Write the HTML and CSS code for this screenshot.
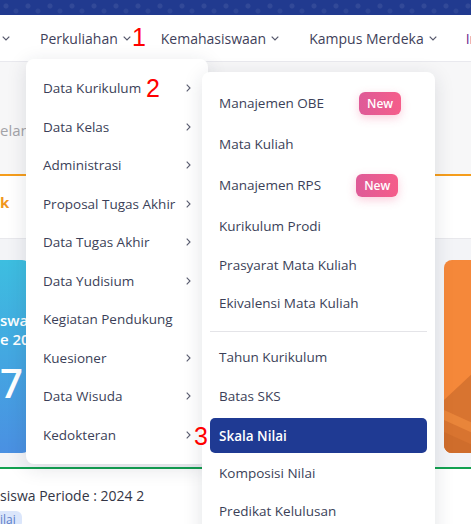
FILE: index.html
```html
<!DOCTYPE html>
<html lang="id">
<head>
<meta charset="utf-8">
<title>Menu Perkuliahan</title>
<link rel="stylesheet" href="styles.css">
</head>
<body>
<div class="page">
  <header class="topbar"></header>
  <nav class="navbar">
    <div class="nav-item"><svg class="caret first" width="8" height="5" viewBox="0 0 8 5"><polyline points="0.7,0.7 4,4 7.3,0.7"/></svg></div>
    <div class="nav-item">Perkuliahan<svg class="caret" width="8" height="5" viewBox="0 0 8 5"><polyline points="0.7,0.7 4,4 7.3,0.7"/></svg></div>
    <div class="nav-item">Kemahasiswaan<svg class="caret" width="8" height="5" viewBox="0 0 8 5"><polyline points="0.7,0.7 4,4 7.3,0.7"/></svg></div>
    <div class="nav-item">Kampus Merdeka<svg class="caret" width="8" height="5" viewBox="0 0 8 5"><polyline points="0.7,0.7 4,4 7.3,0.7"/></svg></div>
    <div class="nav-item nav-purple">Info</div>
  </nav>
  <main class="content">
    <section class="panel">
      <div class="panel-head"><span class="muted">elan</span></div>
      <div class="panel-body"><span class="accent">k</span></div>
    </section>
    <section class="stats">
      <div class="stat stat-blue">
        <div class="stat-label">swa</div>
        <div class="stat-label">e 20</div>
        <div class="stat-value">7</div>
      </div>
      <div class="stat stat-orange">
        <svg class="stat-deco" width="40" height="193" viewBox="0 0 40 193" preserveAspectRatio="none">
          <polygon points="0,140 30,112 40,112 40,193 0,193" fill="#d87430"/>
          <polygon points="0,150 40,168 40,178 0,160" fill="#e9853a"/>
          <polygon points="0,172 40,190 40,193 0,193" fill="#cf6d2c"/>
        </svg>
      </div>
    </section>
    <section class="period">
      <div class="period-title">siswa Periode : 2024 2</div>
      <span class="tag">ilai</span>
    </section>
  </main>

  <div class="menu menu-main">
    <div class="menu-item"><span>Data Kurikulum</span><svg class="chev" width="5" height="8" viewBox="0 0 5 8"><polyline points="0.7,0.7 4,4 0.7,7.3"/></svg></div>
    <div class="menu-item"><span>Data Kelas</span><svg class="chev" width="5" height="8" viewBox="0 0 5 8"><polyline points="0.7,0.7 4,4 0.7,7.3"/></svg></div>
    <div class="menu-item"><span>Administrasi</span><svg class="chev" width="5" height="8" viewBox="0 0 5 8"><polyline points="0.7,0.7 4,4 0.7,7.3"/></svg></div>
    <div class="menu-item"><span>Proposal Tugas Akhir</span><svg class="chev" width="5" height="8" viewBox="0 0 5 8"><polyline points="0.7,0.7 4,4 0.7,7.3"/></svg></div>
    <div class="menu-item"><span>Data Tugas Akhir</span><svg class="chev" width="5" height="8" viewBox="0 0 5 8"><polyline points="0.7,0.7 4,4 0.7,7.3"/></svg></div>
    <div class="menu-item"><span>Data Yudisium</span><svg class="chev" width="5" height="8" viewBox="0 0 5 8"><polyline points="0.7,0.7 4,4 0.7,7.3"/></svg></div>
    <div class="menu-item"><span>Kegiatan Pendukung</span></div>
    <div class="menu-item"><span>Kuesioner</span><svg class="chev" width="5" height="8" viewBox="0 0 5 8"><polyline points="0.7,0.7 4,4 0.7,7.3"/></svg></div>
    <div class="menu-item"><span>Data Wisuda</span><svg class="chev" width="5" height="8" viewBox="0 0 5 8"><polyline points="0.7,0.7 4,4 0.7,7.3"/></svg></div>
    <div class="menu-item"><span>Kedokteran</span><svg class="chev" width="5" height="8" viewBox="0 0 5 8"><polyline points="0.7,0.7 4,4 0.7,7.3"/></svg></div>
  </div>

  <div class="menu menu-sub">
    <div class="sub-item tall">Manajemen OBE<span class="badge">New</span></div>
    <div class="sub-item">Mata Kuliah</div>
    <div class="sub-item tall">Manajemen RPS<span class="badge">New</span></div>
    <div class="sub-item">Kurikulum Prodi</div>
    <div class="sub-item">Prasyarat Mata Kuliah</div>
    <div class="sub-item">Ekivalensi Mata Kuliah</div>
    <div class="divider"></div>
    <div class="sub-item">Tahun Kurikulum</div>
    <div class="sub-item">Batas SKS</div>
    <div class="sub-item active">Skala Nilai</div>
    <div class="sub-item">Komposisi Nilai</div>
    <div class="sub-item">Predikat Kelulusan</div>
  </div>

  <span class="mark mark-1">1</span>
  <span class="mark mark-2">2</span>
  <span class="mark mark-3">3</span>
</div>
</body>
</html>
```

FILE: styles.css
```css
* { box-sizing: border-box; }
html, body { margin: 0; padding: 0; }
body {
  width: 471px;
  height: 524px;
  overflow: hidden;
  background: #f3f4f7;
  font-family: "Open Sans", "Noto Sans", sans-serif;
  color: #3b3f58;
}
.page {
  position: relative;
  width: 471px;
  height: 524px;
  overflow: hidden;
}

/* top banner */
.topbar {
  height: 15px;
  background-color: #213a8f;
  background-image:
    radial-gradient(circle at 6px 6px, rgba(255,255,255,0.08) 2px, transparent 3px),
    radial-gradient(circle at 16px 11px, rgba(255,255,255,0.06) 2px, transparent 3px);
  background-size: 22px 15px;
}

/* navbar */
.navbar {
  height: 47px;
  background: #fff;
  border-bottom: 1px solid #e9e9ee;
  display: flex;
  align-items: center;
  gap: 30px;
  padding-left: 2px;
  white-space: nowrap;
  font-size: 14px;
  color: #3f3f5a;
}
.nav-item {
  display: flex;
  align-items: center;
  flex: none;
}
.nav-purple { color: #6b2a8e; margin-left: -1px; }
.caret {
  margin-left: 5px;
  fill: none;
  stroke: #55576b;
  stroke-width: 1.2;
}
.caret.first { margin-left: 0; }

/* page content behind menus */
.content { display: flex; flex-direction: column; }
.panel { background: #fff; border-bottom: 1px solid #e8e8ec; }
.panel-head {
  height: 114px;
  background: #f7f7f8;
  border-bottom: 2px solid #f59d1c;
  padding-top: 58px;
  line-height: 20px;
}
.muted { color: #a3a3a8; font-size: 15px; }
.panel-body {
  height: 62px;
  padding-top: 16px;
  line-height: 20px;
}
.accent { color: #f0961e; font-weight: 700; font-size: 15px; }

.stats {
  display: flex;
  justify-content: space-between;
  padding: 21px 0 14px;
  border-bottom: 2px solid #12a150;
}
.stat {
  height: 193px;
  width: 150px;
  border-radius: 8px;
  overflow: hidden;
}
.stat-blue {
  margin-left: -120px;
  background: linear-gradient(180deg, #3dbee0 0%, #4a90e2 100%);
  color: #fff;
  display: flex;
  flex-direction: column;
  align-items: flex-end;
  padding-top: 51px;
}
.stat-label {
  width: 26px;
  margin-right: 4px;
  font-size: 15px;
  font-weight: 600;
  line-height: 19px;
  white-space: nowrap;
  overflow: hidden;
}
.stat-value {
  width: 26px;
  margin-right: 4px;
  font-size: 40px;
  font-weight: 600;
  line-height: 44px;
  margin-top: 12px;
}
.stat-orange {
  width: 60px;
  margin-right: -33px;
  background: #f5883a;
}
.stat-deco { display: block; width: 40px; height: 193px; }

.period {
  background: #fff;
  padding-top: 17px;
  height: 60px;
}
.period-title {
  font-size: 14px;
  line-height: 20px;
  color: #333545;
  font-weight: 500;
  white-space: nowrap;
}
.tag {
  display: inline-block;
  margin-top: 5px;
  background: #dbe6fb;
  color: #5b7fc8;
  font-size: 12px;
  line-height: 16px;
  padding: 1px 6px 0 0;
  border-radius: 0 6px 6px 0;
}

/* menus */
.menu {
  position: absolute;
  background: #fff;
  border-radius: 8px;
  box-shadow: 0 4px 20px rgba(30, 35, 60, 0.13);
  padding: 10px 0;
}
.menu-main {
  left: 26px;
  top: 59px;
  width: 182px;
  z-index: 2;
}
.menu-item {
  height: 38.5px;
  display: flex;
  align-items: center;
  justify-content: space-between;
  padding: 0 17px 0 17px;
  font-size: 13.5px;
  white-space: nowrap;
  color: #3b3f58;
}
.chev {
  flex: none;
  fill: none;
  stroke: #5a5d70;
  stroke-width: 1.1;
}

.menu-sub {
  left: 202px;
  top: 71.5px;
  width: 233px;
  height: 500px;
  z-index: 3;
}
.sub-item {
  height: 38.5px;
  margin: 0 8px;
  padding: 0 9px;
  display: flex;
  align-items: center;
  font-size: 13.5px;
  white-space: nowrap;
  color: #3b3f58;
  border-radius: 5px;
}
.sub-item.tall { height: 43.5px; }
.sub-item.active {
  height: 35px;
  margin-top: 3px;
  margin-bottom: 0.5px;
  background: #1f3a93;
  color: #fff;
  font-weight: 600;
}
.divider {
  height: 1px;
  background: #e4e4e8;
  margin: 8px 8px 6.5px;
}
.badge {
  margin-left: 35px;
  height: 23px;
  padding: 0 8px;
  display: inline-flex;
  align-items: center;
  border-radius: 6px;
  background: linear-gradient(90deg, #de5b98, #f55d8a);
  color: #fff;
  font-size: 12px;
  font-weight: 600;
  box-shadow: 0 3px 10px rgba(242, 92, 140, 0.3);
}

/* red annotation numbers */
.mark {
  position: absolute;
  z-index: 5;
  color: #ff0000;
  font-family: "Liberation Sans", Arial, sans-serif;
  font-size: 25px;
  line-height: 25px;
}
.mark-1 { left: 132px; top: 25px; }
.mark-2 { left: 146px; top: 76px; }
.mark-3 { left: 194px; top: 424px; }
```
